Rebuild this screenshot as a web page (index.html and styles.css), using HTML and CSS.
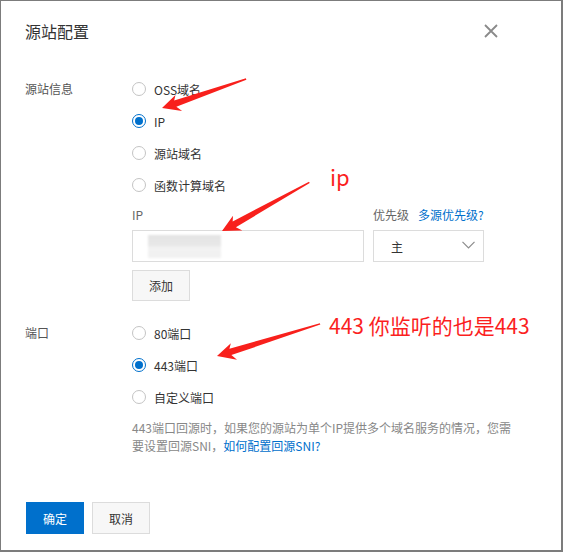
FILE: index.html
```html
<!DOCTYPE html>
<html lang="zh-CN">
<head>
<meta charset="utf-8">
<title>源站配置</title>
<link rel="stylesheet" href="styles.css">
</head>
<body>
<div class="dialog">
  <div class="dialog-header">
    <h2 class="dialog-title">源站配置</h2>
    <button class="dialog-close" type="button" aria-label="关闭">
      <svg width="14" height="14" viewBox="0 0 14 14"><path d="M1 1 L13 13 M13 1 L1 13" stroke="#8a8a8a" stroke-width="1.8" fill="none"/></svg>
    </button>
  </div>

  <div class="dialog-body">
    <div class="form-item">
      <div class="form-label">源站信息</div>
      <div class="form-control">
        <div class="radio-group">
          <label class="radio"><span class="radio-dot"></span>OSS域名</label>
          <label class="radio is-checked"><span class="radio-dot"></span>IP</label>
          <label class="radio"><span class="radio-dot"></span>源站域名</label>
          <label class="radio"><span class="radio-dot"></span>函数计算域名</label>
        </div>
        <div class="origin-row">
          <div class="field field-ip">
            <div class="field-label">IP</div>
            <div class="input"><span class="masked"></span></div>
          </div>
          <div class="field field-priority">
            <div class="field-label">优先级<a class="link" href="#">多源优先级?</a></div>
            <div class="select">
              <span>主</span>
              <svg width="13" height="8" viewBox="0 0 13 8"><path d="M0.5 0.8 L6.5 6.8 L12.5 0.8" stroke="#8c8c8c" stroke-width="1.2" fill="none"/></svg>
            </div>
          </div>
        </div>
        <button class="btn btn-normal btn-add" type="button">添加</button>
      </div>
    </div>

    <div class="form-item form-item-port">
      <div class="form-label">端口</div>
      <div class="form-control">
        <div class="radio-group">
          <label class="radio"><span class="radio-dot"></span>80端口</label>
          <label class="radio is-checked"><span class="radio-dot"></span>443端口</label>
          <label class="radio"><span class="radio-dot"></span>自定义端口</label>
        </div>
        <p class="help">443端口回源时，如果您的源站为单个IP提供多个域名服务的情况，您需<br>要设置回源SNI，<a class="link" href="#">如何配置回源SNI?</a></p>
      </div>
    </div>
  </div>

  <div class="dialog-footer">
    <button class="btn btn-primary" type="button">确定</button>
    <button class="btn btn-normal" type="button">取消</button>
  </div>

  <svg class="marks" width="563" height="552" viewBox="0 0 563 552">
    <g fill="#f8201c">
      <polygon transform="translate(162 108) rotate(-19)" points="0,0 17,-8 14,-3.2 89,-0.7 89,0.7 14,3.4 18,9.5"/>
      <polygon transform="translate(222 231) rotate(-29.1)" points="0,0 17,-8 14,-3.2 100,-0.7 100,0.7 14,3.4 18,9.5"/>
      <polygon transform="translate(217 356) rotate(-17.3)" points="0,0 17,-8 14,-3.2 108,-0.7 108,0.7 14,3.4 18,9.5"/>
    </g>
  </svg>
  <div class="note note-ip">ip</div>
  <div class="note note-port">443 你监听的也是443</div>
</div>
</body>
</html>
```

FILE: styles.css
```css
* {
  box-sizing: border-box;
}

html, body {
  margin: 0;
  padding: 0;
  background: #fff;
}

body {
  font-family: "Noto Sans CJK SC", "Microsoft YaHei", sans-serif;
  font-size: 12px;
  color: #333;
}

.dialog {
  position: relative;
  width: 563px;
  height: 552px;
  background: #fff;
  border: 1px solid #7c7c7c;
  border-right-width: 2px;
  border-bottom-width: 2px;
  display: flex;
  flex-direction: column;
}

/* header */
.dialog-header {
  height: 72px;
  padding: 19px 63px 0 24px;
  display: flex;
  justify-content: space-between;
  align-items: flex-start;
}

.dialog-title {
  margin: 0;
  font-size: 16px;
  line-height: 22px;
  font-weight: normal;
  color: #333;
}

.dialog-close {
  border: 0;
  padding: 0;
  margin-top: 4px;
  background: transparent;
  width: 14px;
  height: 14px;
  display: block;
  cursor: pointer;
}

.dialog-close svg {
  display: block;
}

/* form */
.dialog-body {
  padding: 0 24px;
}

.form-item {
  display: flex;
}

.form-item-port {
  margin-top: 16px;
}

.form-label {
  width: 107px;
  flex: none;
  line-height: 32px;
  color: #555;
}

.form-control {
  flex: 1;
}

.radio-group {
  display: flex;
  flex-direction: column;
}

.radio {
  height: 32px;
  display: flex;
  align-items: center;
  gap: 8px;
  color: #333;
  cursor: pointer;
}

.radio-dot {
  width: 14px;
  height: 14px;
  border-radius: 50%;
  border: 1px solid #c4c4c4;
  background: #fff;
  flex: none;
  position: relative;
}

.radio.is-checked .radio-dot {
  border-color: #0070cc;
}

.radio.is-checked .radio-dot::after {
  content: "";
  position: absolute;
  left: 2px;
  top: 2px;
  width: 8px;
  height: 8px;
  border-radius: 50%;
  background: #0070cc;
}

.origin-row {
  display: flex;
  gap: 9px;
  margin-top: 4px;
}

.field-label {
  line-height: 20px;
  margin-bottom: 5px;
  color: #666;
}

.field-label .link {
  margin-left: 9px;
}

.link {
  color: #0070cc;
  text-decoration: none;
}

.input {
  width: 232px;
  height: 32px;
  border: 1px solid #dcdcdc;
  padding: 4px 0 2px 15px;
}

.masked {
  display: block;
  width: 73px;
  height: 23px;
  background: linear-gradient(to bottom, #e4e4e4 0%, #e8e8e8 45%, #f2f2f2 55%, #f1f1f1 100%);
  filter: blur(1px);
}

.select {
  width: 111px;
  height: 32px;
  border: 1px solid #dcdcdc;
  padding: 0 8px 0 17px;
  display: flex;
  align-items: center;
  justify-content: space-between;
  color: #333;
}

.select svg {
  display: block;
  margin-top: -2px;
}

.btn {
  font-family: inherit;
  font-size: 12px;
  height: 32px;
  padding: 0;
  border: 1px solid #dcdcdc;
  background: #f7f7f7;
  color: #333;
  cursor: pointer;
}

.btn-add {
  margin-top: 8px;
  width: 57px;
  height: 31px;
}

.btn-primary {
  width: 58px;
  background: #0070cc;
  border-color: #0070cc;
  color: #fff;
}

.btn-normal {
  width: 58px;
}

.help {
  margin: 6px 0 0;
  line-height: 18px;
  color: #888;
}

/* footer */
.dialog-footer {
  padding: 47px 24px 0 25px;
  display: flex;
  gap: 8px;
}

/* red callouts drawn over the form */
.marks {
  position: absolute;
  left: -1px;
  top: -1px;
  pointer-events: none;
}

.note {
  position: absolute;
  color: #fb1f1f;
  white-space: nowrap;
  line-height: 1;
  font-family: "Noto Sans CJK SC", "Microsoft YaHei", sans-serif;
}

.note-ip {
  left: 329px;
  top: 164px;
  font-size: 22px;
}

.note-port {
  left: 328px;
  top: 314px;
  font-size: 21px;
}
```
